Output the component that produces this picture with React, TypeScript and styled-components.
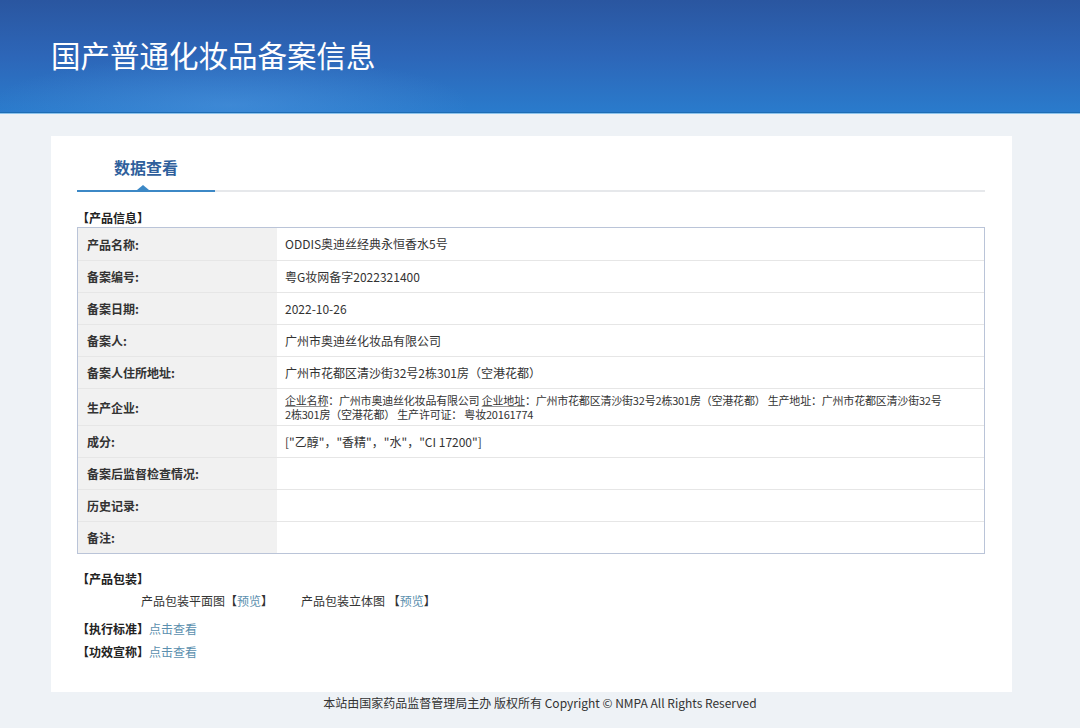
import React from 'react'
import styled, { createGlobalStyle } from 'styled-components';

const GlobalStyle = createGlobalStyle`
    html, body {
        margin: 0;
        padding: 0;
        background: #eef2f6;
        font-family: "Noto Sans CJK SC", "Noto Sans", sans-serif;
        color: #333;
    }
`;

type Row = { label: string; value?: React.ReactNode; tall?: boolean };

const getRows = (): Row[] => [
    { label: '产品名称:', value: 'ODDIS奥迪丝经典永恒香水5号' },
    { label: '备案编号:', value: '粤G妆网备字2022321400' },
    { label: '备案日期:', value: '2022-10-26' },
    { label: '备案人:', value: '广州市奥迪丝化妆品有限公司' },
    { label: '备案人住所地址:', value: '广州市花都区清沙街32号2栋301房（空港花都）' },
    {
        label: '生产企业:',
        tall: true,
        value: (
            <div>
                <Line>
                    <Under>企业名称</Under>：广州市奥迪丝化妆品有限公司 <Under>企业地址</Under>：广州市花都区清沙街32号2栋301房（空港花都） 生产地址：广州市花都区清沙街32号
                </Line>
                <Line>2栋301房（空港花都） 生产许可证： 粤妆20161774</Line>
            </div>
        ),
    },
    { label: '成分:', value: '["乙醇"，"香精"，"水"，"CI 17200"]' },
    { label: '备案后监督检查情况:' },
    { label: '历史记录:' },
    { label: '备注:' },
];

const App = () => {
    const rows = getRows();
    return (
        <Page>
            <GlobalStyle />
            <Banner>
                <Title>国产普通化妆品备案信息</Title>
            </Banner>
            <Card>
                <TabBar>
                    <Tab>数据查看</Tab>
                </TabBar>
                <SectionTitle>【产品信息】</SectionTitle>
                <Table>
                    {rows.map((r) => (
                        <TableRow key={r.label} $tall={r.tall}>
                            <Label>{r.label}</Label>
                            <Value $tall={r.tall}>{r.value}</Value>
                        </TableRow>
                    ))}
                </Table>
                <SectionTitle $top={16}>【产品包装】</SectionTitle>
                <PackRow>
                    <PackItem>产品包装平面图【<Link>预览</Link>】</PackItem>
                    <PackItem>产品包装立体图 【<Link>预览</Link>】</PackItem>
                </PackRow>
                <LinkLine $top={10}>
                    <b>【执行标准】</b>
                    <Link>点击查看</Link>
                </LinkLine>
                <LinkLine $top={5}>
                    <b>【功效宣称】</b>
                    <Link>点击查看</Link>
                </LinkLine>
            </Card>
            <Footer>本站由国家药品监督管理局主办 版权所有 Copyright © NMPA All Rights Reserved</Footer>
        </Page>
    )
}

const Page = styled.div`
    width: 1080px;
    min-height: 728px;
    display: flex;
    flex-direction: column;
`;

const Banner = styled.div`
    height: 112px;
    padding-left: 51px;
    display: flex;
    align-items: center;
    background:
        radial-gradient(ellipse 240px 50px at 230px 105px, rgba(90, 160, 230, 0.4), transparent),
        linear-gradient(180deg, #2a56a0 0%, #2d66b8 50%, #2a7bcc 100%);
    border-bottom: 1px solid #1e6db4;
    box-shadow: 0 1px 0 #8cc3ec;
`;

const Title = styled.h1`
    margin: 0 0 4px;
    font-size: 29.5px;
    font-weight: 400;
    color: #fff;
`;

const Card = styled.div`
    width: 961px;
    margin: 23px 0 0 51px;
    box-sizing: border-box;
    padding: 0 27px 31px 26px;
    background: #fff;
`;

const TabBar = styled.div`
    border-bottom: 2px solid #e6e8eb;
    display: flex;
`;

const Tab = styled.div`
    position: relative;
    width: 138px;
    padding: 20px 0 12px;
    line-height: 22px;
    text-align: center;
    font-size: 16px;
    font-weight: bold;
    color: #2f5f9c;
    margin-bottom: -2px;
    border-bottom: 2px solid #3c88c6;

    &::after {
        content: '';
        position: absolute;
        left: 60px;
        bottom: 0;
        border-left: 6px solid transparent;
        border-right: 6px solid transparent;
        border-bottom: 5px solid #3c88c6;
    }
`;

const SectionTitle = styled.div<{ $top?: number }>`
    margin-top: ${(p) => p.$top ?? 17}px;
    font-size: 12px;
    font-weight: bold;
    line-height: 18px;
    color: #222;
`;

const Table = styled.div`
    border: 1px solid #bac4d8;
    display: flex;
    flex-direction: column;
`;

const TableRow = styled.div<{ $tall?: boolean }>`
    display: grid;
    grid-template-columns: 199px 1fr;
    height: ${(p) => (p.$tall ? 36 : 31)}px;
    border-top: 1px solid #e6e6e6;

    &:first-child {
        border-top: none;
        height: 32px;
    }
`;

const Label = styled.div`
    background: #f1f1f1;
    padding-left: 9px;
    display: flex;
    align-items: center;
    font-size: 12px;
    font-weight: bold;
    color: #333;
`;

const Value = styled.div<{ $tall?: boolean }>`
    padding-left: 8px;
    display: flex;
    align-items: center;
    font-size: ${(p) => (p.$tall ? '11px' : '12px')};
    letter-spacing: ${(p) => (p.$tall ? '-0.2px' : '0')};
    line-height: 16px;
    color: #333;
    white-space: nowrap;
`;

const Line = styled.div`
    height: 14px;
    line-height: 14px;
    overflow: visible;
`;

const Under = styled.span`
    text-decoration: underline;
    text-decoration-color: #999;
`;

const PackRow = styled.div`
    display: flex;
    gap: 28px;
    padding-left: 64px;
    margin-top: 4px;
`;

const PackItem = styled.div`
    font-size: 12px;
    line-height: 18px;
    color: #333;
`;

const Link = styled.span`
    color: #5b8fae;
`;

const LinkLine = styled.div<{ $top: number }>`
    margin-top: ${(p) => p.$top}px;
    font-size: 12px;
    line-height: 18px;
    color: #222;
    display: flex;
`;

const Footer = styled.div`
    text-align: center;
    font-size: 12px;
    line-height: 20px;
    padding: 1px 0 16px;
    color: #333;
`;

export default App;
